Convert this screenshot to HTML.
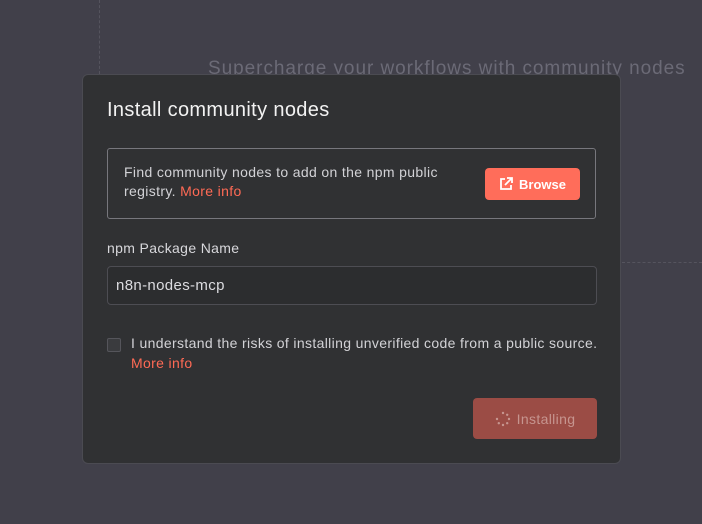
<!DOCTYPE html>
<html><head><style>
body{margin:0;width:702px;height:524px;background:#41404a;font-family:"Liberation Sans",sans-serif;position:relative;overflow:hidden}
.bgt{position:absolute;left:208px;top:58px;font-size:19px;letter-spacing:0.95px;color:#6b6a76;white-space:nowrap}
.vl{position:absolute;left:99px;top:0;height:74px;border-left:1px dashed #55545e}
.hl{position:absolute;left:622px;top:262px;width:80px;border-top:1px dashed #55545e}
.modal{position:absolute;left:82px;top:74px;width:537px;height:388px;background:#303133;border:1px solid #4b4b52;border-radius:6px;overflow:hidden;letter-spacing:0.35px}
.t{position:absolute;left:24px;top:24px;font-size:20px;color:#f2f2f2}
.box{position:absolute;left:24px;top:73px;width:487px;height:69px;border:1px solid #77777d;border-radius:3px}
.box p{position:absolute;left:16px;top:14px;margin:0;font-size:14px;line-height:19px;color:#d2d2d6;width:340px}
.red{color:#ff6a55}
.br{position:absolute;left:377px;top:19px;width:95px;height:32px;background:#ff6d5a;border-radius:4px;color:#fff;font-size:13px;font-weight:bold;letter-spacing:0;display:flex;align-items:center;justify-content:center;gap:6px}
.lab{position:absolute;left:24px;top:165px;font-size:14px;color:#d8d8dc}
.inp{position:absolute;left:24px;top:191px;width:490px;height:39px;border:1px solid #4d4d53;border-radius:4px;background:#2c2d2f;box-sizing:border-box;padding:0 8px;line-height:37px;font-size:15px;color:#dcdce0}
.cb{position:absolute;left:24px;top:263px;width:12px;height:12px;border:1px solid #55555b;background:#3a3b3e;border-radius:2px}
.ct{position:absolute;left:48px;top:258px;width:466px;overflow:hidden;white-space:nowrap;font-size:14px;line-height:20px;color:#d2d2d6}
.inst{position:absolute;left:390px;top:323px;width:124px;height:41px;background:#9b4c45;border-radius:4px;color:#c6958f;font-size:14px;display:flex;align-items:center;justify-content:center;gap:6px}
</style></head><body>
<div class="vl"></div><div class="hl"></div>
<div class="bgt">Supercharge your workflows with community nodes</div>
<div class="modal">
<div class="t">Install community nodes</div>
<div class="box"><p>Find community nodes to add on the npm public registry. <span class="red">More info</span></p>
<div class="br"><svg width="14" height="14" viewBox="0 0 14 14" fill="none" stroke="#fff" stroke-width="1.8"><path d="M6 2H2v10h10V8"/><path d="M8 1h5v5M13 1L6 8"/></svg>Browse</div></div>
<div class="lab">npm Package Name</div>
<div class="inp">n8n-nodes-mcp</div>
<div class="cb"></div>
<div class="ct">I understand the risks of installing unverified code from a public source.<br><span class="red">More info</span></div>
<div class="inst"><svg width="16" height="16" viewBox="0 0 16 16" fill="#c6958f"><circle cx="8" cy="2" r="1.2"/><circle cx="12.2" cy="3.8" r="1.2"/><circle cx="14" cy="8" r="1.2"/><circle cx="12.2" cy="12.2" r="1.2"/><circle cx="8" cy="14" r="1.2"/><circle cx="3.8" cy="12.2" r="1.2"/><circle cx="2" cy="8" r="1.2"/></svg>Installing</div>
</div>
</body></html>
